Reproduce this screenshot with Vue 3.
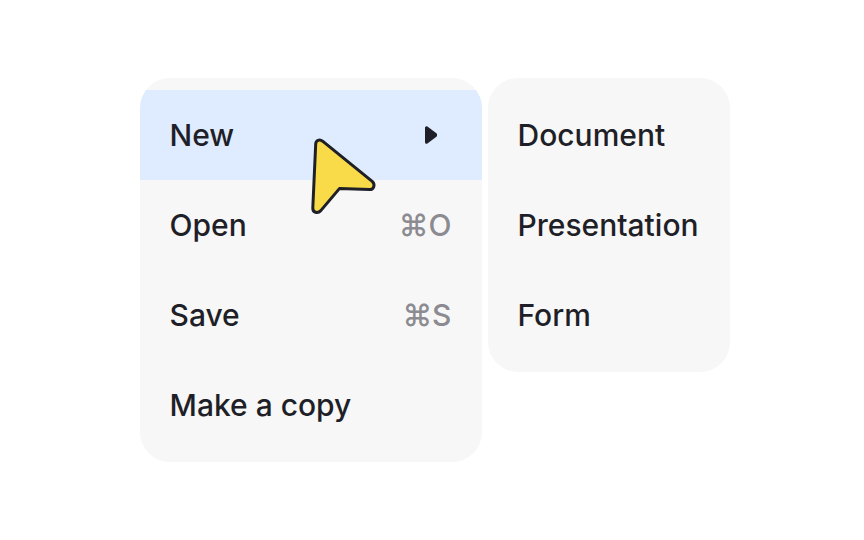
<script setup>
const items = [
  { label: 'New', submenu: true },
  { label: 'Open', shortcut: '⌘O' },
  { label: 'Save', shortcut: '⌘S' },
  { label: 'Make a copy' },
]
const documents = ['Document', 'Presentation', 'Form']
</script>

<template>
  <main class="stage">
    <div class="menus">
      <div class="menu menu-main" role="menu" aria-label="File">
        <button
          v-for="item in items"
          :key="item.label"
          class="item"
          :class="{ active: item.submenu }"
          type="button"
          role="menuitem"
        >
          <span>{{ item.label }}</span>
          <svg v-if="item.submenu" class="arrow" viewBox="0 0 14 20" aria-hidden="true">
            <path d="M2.5 2.8V17.2L11.5 10.6V9.4Z" />
          </svg>
          <span v-else-if="item.shortcut" class="shortcut">{{ item.shortcut }}</span>
        </button>
        <svg class="cursor" viewBox="0 0 90 90" aria-hidden="true">
          <path
            d="M15.7 14C15.8 10.4 19.5 8.8 22.6 11.2L72.2 51.4C75.6 54.6 73.8 59.6 69.6 59.6L39.4 58.6L20.8 80.6C17.6 84 12.6 82.4 12.8 78Z"
          />
        </svg>
      </div>
      <div class="menu menu-sub" role="menu" aria-label="New">
        <button v-for="name in documents" :key="name" class="item" type="button" role="menuitem">
          {{ name }}
        </button>
      </div>
    </div>
  </main>
</template>

<style>
body {
  background: #fff;
}
</style>

<style scoped>
.stage {
  display: flex;
  justify-content: center;
  align-items: center;
  min-height: 100vh;
  padding-left: 5px;
  box-sizing: border-box;
  font-family: Inter, sans-serif;
}
.menus {
  display: flex;
  align-items: flex-start;
  gap: 6px;
}
.menu {
  position: relative;
  padding: 12px 0;
  border-radius: 30px;
  background: #f7f7f7;
  overflow: hidden;
}
.menu-main {
  min-width: 342px;
}
.menu-sub {
  min-width: 242px;
}
.item {
  display: flex;
  align-items: center;
  justify-content: space-between;
  width: 100%;
  height: 90px;
  padding: 0 30px;
  border: 0;
  background: transparent;
  color: #1f1f28;
  font: 450 30px/36px Inter, sans-serif;
  text-align: left;
}
.active {
  background: #dfecff;
}
.shortcut {
  color: #8b8b91;
}
.arrow {
  width: 14px;
  height: 20px;
  margin-right: 14px;
  fill: #1f1f28;
  stroke: #1f1f28;
  stroke-width: 3;
  stroke-linejoin: round;
}
.cursor {
  position: absolute;
  top: 52px;
  left: 160px;
  width: 90px;
  height: 90px;
  fill: #f9da48;
  stroke: #1f1f28;
  stroke-width: 3;
  stroke-linejoin: round;
  pointer-events: none;
}
</style>
